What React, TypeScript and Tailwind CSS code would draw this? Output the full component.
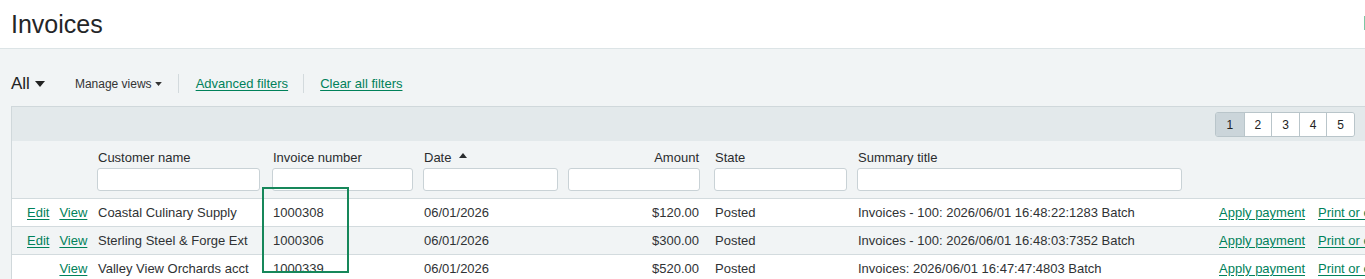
import React from 'react';

interface InvoiceRow {
  edit: boolean;
  customer: string;
  number: string;
  date: string;
  amount: string;
  state: string;
  summary: string;
}

const rows: InvoiceRow[] = [
  {
    edit: true,
    customer: 'Coastal Culinary Supply',
    number: '1000308',
    date: '06/01/2026',
    amount: '$120.00',
    state: 'Posted',
    summary: 'Invoices - 100: 2026/06/01 16:48:22:1283 Batch',
  },
  {
    edit: true,
    customer: 'Sterling Steel & Forge Ext',
    number: '1000306',
    date: '06/01/2026',
    amount: '$300.00',
    state: 'Posted',
    summary: 'Invoices - 100: 2026/06/01 16:48:03:7352 Batch',
  },
  {
    edit: false,
    customer: 'Valley View Orchards acct',
    number: '1000339',
    date: '06/01/2026',
    amount: '$520.00',
    state: 'Posted',
    summary: 'Invoices: 2026/06/01 16:47:47:4803 Batch',
  },
];

function Caret({ className }: { className?: string }) {
  return (
    <svg viewBox="0 0 10 6" className={className} fill="currentColor">
      <path d="M0 0h10L5 6z" />
    </svg>
  );
}

function FilterInput({ width }: { width: string }) {
  return <div className={`${width} h-[23px] rounded-[3px] border border-[#c9d2d6] bg-white`} />;
}

function App() {
  return (
    <div className="w-[1365px] h-[279px] overflow-hidden bg-[#f1f4f5] text-[#2f3234] font-['Liberation_Sans',Arial,sans-serif]">
      {/* page header */}
      <div className="h-[49px] bg-white border-b border-[#dce4e6] flex items-center justify-between pl-[11px]">
        <h1 className="text-[25px] leading-none text-[#242628] mt-[1px]">Invoices</h1>
        <div className="w-[1px] h-[14px] bg-[#7cc7a4] -mt-[2px]" />
      </div>

      {/* toolbar */}
      <div className="h-[57px] flex items-center pl-[11px] pt-[12px]">
        <div className="flex items-center gap-[5px]">
          <span className="text-[17px] text-[#222]">All</span>
          <Caret className="w-[10px] h-[6px] text-[#222]" />
        </div>
        <div className="flex items-center gap-[3px] ml-[30px] text-[12px] text-[#333]">
          <span>Manage views</span>
          <Caret className="w-[7px] h-[4px]" />
        </div>
        <div className="w-[1px] h-[19px] bg-[#d3dadd] ml-[16px]" />
        <a className="ml-[17px] text-[13px] text-[#00815a] underline underline-offset-[2px] decoration-[#00815a]">
          Advanced filters
        </a>
        <div className="w-[1px] h-[19px] bg-[#d3dadd] ml-[15px]" />
        <a className="ml-[16px] text-[13px] text-[#00815a] underline underline-offset-[2px] decoration-[#00815a]">
          Clear all filters
        </a>
      </div>

      {/* table panel */}
      <div className="relative ml-[11px] w-[1500px] border-l border-t border-[#d0d8db]">
        <div className="h-[34px] bg-[#e3e9eb] flex items-start pt-[5px] pl-[1203px]">
          <div className="flex rounded-[3px] border border-[#b9c5ca] overflow-hidden text-[12px] text-[#222]">
            {['1', '2', '3', '4', '5'].map((p, i) => (
              <div
                key={p}
                className={`w-[27.6px] h-[23px] flex items-center justify-center ${i > 0 ? 'border-l border-[#b9c5ca] bg-white' : 'bg-[#cbd5da]'}`}
              >
                {p}
              </div>
            ))}
          </div>
        </div>

        {/* column headings + filters */}
        <div className="h-[57px] bg-[#f1f4f5] flex text-[13px] text-[#2a2c2e]">
          <div className="w-[80px]" />
          <div className="w-[175px] pl-[5px] pt-[7px]">
            <div className="pl-[1px] h-[20px]">Customer name</div>
            <FilterInput width="w-[163px]" />
          </div>
          <div className="w-[151px] pl-[5px] pt-[7px]">
            <div className="pl-[1px] h-[20px]">Invoice number</div>
            <FilterInput width="w-[141px]" />
          </div>
          <div className="w-[145px] pl-[5px] pt-[7px]">
            <div className="pl-[1px] h-[20px] flex items-start gap-[8px]">
              <span>Date</span>
              <Caret className="w-[8px] h-[5px] rotate-180 mt-[5px]" />
            </div>
            <FilterInput width="w-[135px]" />
          </div>
          <div className="w-[146px] pl-[5px] pt-[7px]">
            <div className="w-[132px] h-[20px] text-right pr-[1px]">Amount</div>
            <FilterInput width="w-[132px]" />
          </div>
          <div className="w-[143px] pl-[5px] pt-[7px]">
            <div className="pl-[1px] h-[20px]">State</div>
            <FilterInput width="w-[133px]" />
          </div>
          <div className="w-[335px] pl-[5px] pt-[7px]">
            <div className="pl-[1px] h-[20px]">Summary title</div>
            <FilterInput width="w-[325px]" />
          </div>
        </div>

        {/* data rows */}
        {rows.map((r, i) => (
          <div
            key={r.number}
            className={`h-[28px] flex items-center border-t border-[#d3dbde] text-[13px] text-[#2f3234] ${i % 2 === 1 ? 'bg-[#f1f4f5]' : 'bg-white'}`}
          >
            <div className="w-[80px] flex items-center pl-[15px]">
              <a className={`text-[#00815a] underline underline-offset-[2px] ${r.edit ? '' : 'invisible'}`}>Edit</a>
              <a className="ml-[10px] text-[#00815a] underline underline-offset-[2px]">View</a>
            </div>
            <div className="w-[175px] pl-[6px] whitespace-nowrap">{r.customer}</div>
            <div className="w-[151px] pl-[6px]">{r.number}</div>
            <div className="w-[145px] pl-[6px]">{r.date}</div>
            <div className="w-[146px] pl-[5px]">
              <div className="w-[132px] text-right pr-[1px]">{r.amount}</div>
            </div>
            <div className="w-[143px] pl-[6px]">{r.state}</div>
            <div className="w-[367px] pl-[6px] whitespace-nowrap">{r.summary}</div>
            <div className="flex items-center whitespace-nowrap">
              <a className="text-[#00815a] underline underline-offset-[2px]">Apply payment</a>
              <a className="ml-[13px] text-[#00815a] underline underline-offset-[2px]">Print or email</a>
            </div>
          </div>
        ))}

        {/* highlight box over invoice number column */}
        <div className="absolute left-[250px] top-[80px] w-[87px] h-[86px] border-2 border-[#16875a] pointer-events-none" />
      </div>
    </div>
  );
}

export default App;
